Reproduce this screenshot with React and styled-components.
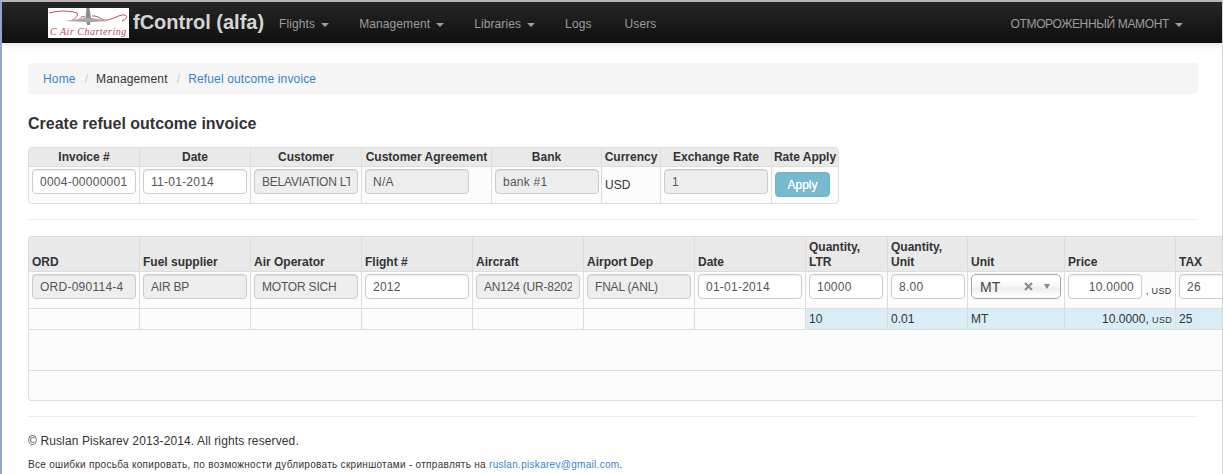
import React from "react";
import styled, { createGlobalStyle } from "styled-components";

const GlobalStyle = createGlobalStyle`
  html, body {
    margin: 0;
    padding: 0;
    background: #fff;
    overflow: hidden;
  }
  body {
    font-family: "Liberation Sans", Arial, sans-serif;
    font-size: 12px;
    color: #333;
  }
`;

const Page = styled.div`
  width: 1223px;
  height: 474px;
  box-sizing: border-box;
  border-top: 2px solid #b5b5b5;
  border-left: 2px solid #8fa9c8;
  border-right: 1px solid #d5d5d5;
  overflow: hidden;
`;

const Navbar = styled.div`
  height: 41px;
  display: flex;
  align-items: center;
  padding-left: 46px;
  padding-right: 39px;
  background: linear-gradient(to bottom, #262626, #0f0f0f);
  box-shadow: 0 2px 6px rgba(0, 0, 0, 0.12);
`;

const Brand = styled.div`
  font-size: 20px;
  font-weight: bold;
  color: #d4d4d4;
  margin-left: 4px;
  white-space: nowrap;
`;

const NavLink = styled.a`
  color: #9d9d9d;
  font-size: 12px;
  letter-spacing: 0.1px;
  padding: 2px 15px 0;
  white-space: nowrap;
  display: flex;
  align-items: center;
`;

const UsersLink = styled(NavLink)`
  margin-left: 3px;
`;

const UserMenu = styled(NavLink)`
  margin-left: auto;
  padding: 2px 0 0;
  letter-spacing: -0.35px;
`;

const Caret = styled.span`
  display: inline-block;
  margin-left: 6px;
  margin-top: 2px;
  border-top: 4px solid #9d9d9d;
  border-left: 4px solid transparent;
  border-right: 4px solid transparent;
`;

const Container = styled.div`
  width: 1170px;
  margin-left: 26px;
  padding-top: 20px;
`;

const Breadcrumb = styled.div`
  height: 31px;
  display: flex;
  align-items: center;
  padding: 0 15px;
  background: #f5f5f5;
  border-radius: 4px;
  font-size: 12px;
  letter-spacing: 0.15px;
`;

const Crumb = styled.span`
  color: ${(p) => (p.$link ? "#3583cf" : "#333")};
`;

const Slash = styled.span`
  color: #ccc;
  padding: 0 8px 0 9px;
`;

const Title = styled.h4`
  margin: 21px 0 14px;
  font-size: 16px;
  line-height: 18px;
  font-weight: bold;
  color: #333;
`;

const Table = styled.table`
  border-collapse: separate;
  border-spacing: 0;
  table-layout: fixed;
  width: ${(p) => p.$width}px;
  border: 1px solid #ddd;
  border-right: ${(p) => (p.$closed ? "1px solid #ddd" : "none")};
  border-radius: ${(p) => (p.$closed ? "4px" : "4px 0 0 4px")};
  background: #fcfcfc;

  th:first-child {
    border-top-left-radius: 3px;
  }
  th:last-child {
    border-top-right-radius: ${(p) => (p.$closed ? "3px" : "0")};
    border-right: none;
  }
  td:last-child {
    border-right: none;
  }
  tbody tr:last-child td {
    border-bottom: none;
  }
`;

const Th = styled.th`
  background: #e9e9e9;
  font-size: 12px;
  line-height: ${(p) => (p.$left ? 15 : 14)}px;
  font-weight: bold;
  color: #333;
  padding: ${(p) => (p.$left ? "3px 3px 1px" : "2px 0")};
  text-align: ${(p) => (p.$left ? "left" : "center")};
  vertical-align: bottom;
  white-space: nowrap;
  border-right: 1px solid #ddd;
  border-bottom: 1px solid #ddd;
`;

const Td = styled.td`
  padding: ${(p) => (p.$pad ? p.$pad : "2px 3px 9px")};
  height: ${(p) => p.$h || 25}px;
  vertical-align: top;
  box-sizing: content-box;
  font-size: 12px;
  line-height: 14px;
  border-right: ${(p) => (p.$span ? "none" : "1px solid #ddd")};
  border-bottom: 1px solid #ddd;
  background: ${(p) => (p.$info ? "#d9edf7" : "transparent")};
  text-align: ${(p) => (p.$right ? "right" : "left")};
  white-space: nowrap;
`;

const Input = styled.input`
  display: block;
  width: ${(p) => p.$w || 104}px;
  height: 25px;
  box-sizing: border-box;
  padding: 0 7px;
  font-family: inherit;
  font-size: 12px;
  letter-spacing: ${(p) => p.$track ?? 0.25}px;
  color: #555;
  border: 1px solid #ccc;
  border-radius: 4px;
  background: ${(p) => (p.readOnly ? "#eee" : "#fff")};
  text-align: ${(p) => (p.$right ? "right" : "left")};
  box-shadow: inset 0 1px 1px rgba(0, 0, 0, 0.075);
`;

const Plain = styled.span`
  display: block;
  font-size: 12px;
  line-height: 14px;
  margin-top: 9px;
`;

const ApplyButton = styled.button`
  display: block;
  width: 55px;
  height: 25px;
  margin: 3px 0 -3px 0;
  padding: 0;
  border: 1px solid #6fb4cb;
  border-radius: 4px;
  background: #77b9cf;
  color: #fff;
  font-family: inherit;
  font-size: 12px;
  text-shadow: 0 0 0.5px #fff;
`;

const Rule = styled.div`
  height: 1px;
  background: #eee;
  margin: ${(p) => p.$m};
`;

const PriceCell = styled.div`
  display: flex;
  align-items: flex-end;
`;

const Suffix = styled.span`
  font-size: 9px;
  line-height: 11px;
  letter-spacing: 0.3px;
  margin-left: 4px;
  margin-bottom: 2px;
  white-space: nowrap;
`;

const Small = styled.small`
  font-size: 9px;
  letter-spacing: 0.3px;
`;

const Select = styled.div`
  width: 90px;
  height: 25px;
  box-sizing: border-box;
  display: flex;
  align-items: center;
  padding: 0 10px 0 8px;
  border: 1px solid #aaa;
  border-radius: 5px;
  background: linear-gradient(to bottom, #fff 20%, #f6f6f6 50%, #eee 55%, #fff);
  box-shadow: 0 0 2px rgba(0, 0, 0, 0.1);
  color: #444;
  font-size: 14px;
`;

const SelectValue = styled.span`
  flex: 1;
`;

const SelectArrow = styled.span`
  margin-left: 11px;
  border-top: 5px solid #888;
  border-left: 3px solid transparent;
  border-right: 3px solid transparent;
`;

const Footer = styled.div`
  font-size: 12px;
  letter-spacing: 0.12px;
  color: #333;
  line-height: 14px;
`;

const FooterNote = styled.div`
  font-size: 10px;
  line-height: 12px;
  color: #333;
  margin-top: 11px;
  letter-spacing: 0.3px;
`;

const MailLink = styled.a`
  color: #3583cf;
`;

function Logo() {
  return (
    <svg width="81" height="30" viewBox="0 0 81 30">
      <rect width="81" height="30" fill="#fff" />
      <path
        d="M1 5 C12 2 24 3 29 5 C31 8 26 11 23 13 M31 12 C33 9 34 8 37 9 M44 8 C50 7 54 13 59 12 C66 11 72 6 77 7 C80 8 79 11 74 13"
        fill="none"
        stroke="#b8384c"
        strokeWidth="0.9"
      />
      <path d="M38.5 0 L41.5 0 L43 10 L42 17 L39 17 L37.5 10 Z" fill="#8c8c8c" />
      <path d="M17 13 L37 10 L44 10 L61 13 L44 14 L37 14 Z" fill="#a8a8a8" />
      <text
        x="2"
        y="27"
        fontFamily="'Liberation Serif', serif"
        fontStyle="italic"
        fontSize="10"
        letterSpacing="0.5"
        fill="#c0485a"
      >
        C Air Chartering
      </text>
    </svg>
  );
}

const invoiceWidths = [111, 111, 111, 130, 110, 59, 111, 66];
const orderWidths = [111, 111, 111, 111, 111, 111, 111, 82, 80, 97, 111, 111];

const Colgroup = ({ widths }) => (
  <colgroup>
    {widths.map((w, i) => (
      <col key={i} style={{ width: w }} />
    ))}
  </colgroup>
);

const ROW_PAD = "3px 3px 2px";

export default function App() {
  return (
    <Page>
      <GlobalStyle />
      <Navbar>
        <Logo />
        <Brand>fControl (alfa)</Brand>
        <NavLink>Flights<Caret /></NavLink>
        <NavLink>Management<Caret /></NavLink>
        <NavLink>Libraries<Caret /></NavLink>
        <NavLink>Logs</NavLink>
        <UsersLink>Users</UsersLink>
        <UserMenu>ОТМОРОЖЕННЫЙ МАМОНТ<Caret /></UserMenu>
      </Navbar>
      <Container>
        <Breadcrumb>
          <Crumb $link>Home</Crumb>
          <Slash>/</Slash>
          <Crumb>Management</Crumb>
          <Slash>/</Slash>
          <Crumb $link>Refuel outcome invoice</Crumb>
        </Breadcrumb>
        <Title>Create refuel outcome invoice</Title>
        <Table $width={811} $closed>
          <Colgroup widths={invoiceWidths} />
          <thead>
            <tr>
              <Th>Invoice #</Th>
              <Th>Date</Th>
              <Th>Customer</Th>
              <Th>Customer Agreement</Th>
              <Th>Bank</Th>
              <Th>Currency</Th>
              <Th>Exchange Rate</Th>
              <Th>Rate Apply</Th>
            </tr>
          </thead>
          <tbody>
            <tr>
              <Td><Input defaultValue="0004-00000001" /></Td>
              <Td><Input defaultValue="11-01-2014" /></Td>
              <Td><Input readOnly $track={-0.2} defaultValue="BELAVIATION LTD" /></Td>
              <Td><Input readOnly defaultValue="N/A" /></Td>
              <Td><Input readOnly defaultValue="bank #1" /></Td>
              <Td><Plain>USD</Plain></Td>
              <Td><Input readOnly defaultValue="1" /></Td>
              <Td><ApplyButton>Apply</ApplyButton></Td>
            </tr>
          </tbody>
        </Table>
        <Rule $m="15px 0 16px" />
        <Table $width={1259}>
          <Colgroup widths={orderWidths} />
          <thead>
            <tr>
              <Th $left>ORD</Th>
              <Th $left>Fuel supplier</Th>
              <Th $left>Air Operator</Th>
              <Th $left>Flight #</Th>
              <Th $left>Aircraft</Th>
              <Th $left>Airport Dep</Th>
              <Th $left>Date</Th>
              <Th $left>Quantity,<br />LTR</Th>
              <Th $left>Quantity,<br />Unit</Th>
              <Th $left>Unit</Th>
              <Th $left>Price</Th>
              <Th $left>TAX</Th>
            </tr>
          </thead>
          <tbody>
            <tr>
              <Td><Input readOnly defaultValue="ORD-090114-4" /></Td>
              <Td><Input readOnly $track={-0.2} defaultValue="AIR BP" /></Td>
              <Td><Input readOnly $track={-0.2} defaultValue="MOTOR SICH" /></Td>
              <Td><Input defaultValue="2012" /></Td>
              <Td><Input readOnly $track={-0.2} defaultValue="AN124 (UR-82027)" /></Td>
              <Td><Input readOnly $track={-0.2} defaultValue="FNAL (ANL)" /></Td>
              <Td><Input defaultValue="01-01-2014" /></Td>
              <Td><Input $w={74} defaultValue="10000" /></Td>
              <Td><Input $w={74} defaultValue="8.00" /></Td>
              <Td>
                <Select>
                  <SelectValue>MT</SelectValue>
                  <svg width="9" height="9" viewBox="0 0 9 9">
                    <path d="M1 1 L8 8 M8 1 L1 8" stroke="#888" strokeWidth="2" />
                  </svg>
                  <SelectArrow />
                </Select>
              </Td>
              <Td>
                <PriceCell>
                  <Input $w={74} $right defaultValue="10.0000" />
                  <Suffix>, USD</Suffix>
                </PriceCell>
              </Td>
              <Td><Input defaultValue="26" /></Td>
            </tr>
            <tr>
              <Td $pad={ROW_PAD} $h={14} />
              <Td $pad={ROW_PAD} $h={14} />
              <Td $pad={ROW_PAD} $h={14} />
              <Td $pad={ROW_PAD} $h={14} />
              <Td $pad={ROW_PAD} $h={14} />
              <Td $pad={ROW_PAD} $h={14} />
              <Td $pad={ROW_PAD} $h={14} />
              <Td $info $pad={ROW_PAD} $h={14}>10</Td>
              <Td $info $pad={ROW_PAD} $h={14}>0.01</Td>
              <Td $info $pad={ROW_PAD} $h={14}>MT</Td>
              <Td $info $right $pad={ROW_PAD} $h={14}>10.0000, <Small>USD</Small></Td>
              <Td $info $pad={ROW_PAD} $h={14}>25</Td>
            </tr>
            <tr><Td colSpan={12} $span $pad="0" $h={40} /></tr>
            <tr><Td colSpan={12} $span $pad="0" $h={29} /></tr>
          </tbody>
        </Table>
        <Rule $m="15px 0 17px" />
        <Footer>© Ruslan Piskarev 2013-2014. All rights reserved.</Footer>
        <FooterNote>
          Все ошибки просьба копировать, по возможности дублировать скриншотами - отправлять на{" "}
          <MailLink>ruslan.piskarev@gmail.com</MailLink>.
        </FooterNote>
      </Container>
    </Page>
  );
}
